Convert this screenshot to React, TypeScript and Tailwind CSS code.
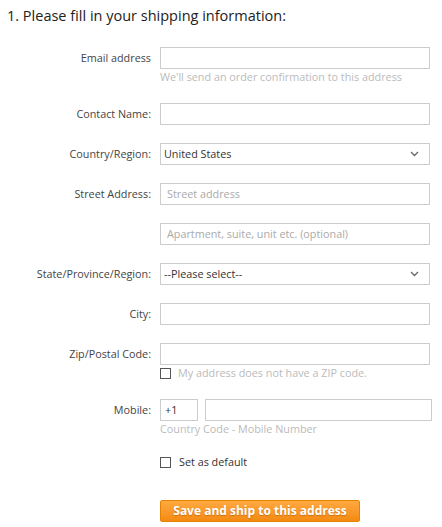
import React from "react"

// -------------------------------------------------------------------
// Small pieces
// -------------------------------------------------------------------

const FONT = "font-['Open_Sans',_'Liberation_Sans',_sans-serif]"

function Label({ children }: { children?: React.ReactNode }) {
  return (
    <div className="w-[151px] shrink-0 text-right text-[10.8px] leading-[22px] text-[#444]">
      {children}
    </div>
  )
}

function TextBox({ placeholder }: { placeholder?: string }) {
  return (
    <div className="flex h-[22px] w-[270px] items-center border border-[#ccc] bg-white px-[6px] text-[10.8px] text-[#aaa]">
      {placeholder}
    </div>
  )
}

function SelectBox({ value }: { value: string }) {
  return (
    <div className="flex h-[22px] w-[270px] items-center justify-between border border-[#ccc] bg-white pl-[3px] pr-[10px] text-[10.8px] text-[#333]">
      <span>{value}</span>
      <svg width="9" height="6" viewBox="0 0 9 6" fill="none">
        <path d="M1 1l3.5 3.5L8 1" stroke="#666" strokeWidth="1.3" />
      </svg>
    </div>
  )
}

function Check({ label, muted }: { label: string; muted?: boolean }) {
  return (
    <div className="flex h-[16px] items-center">
      <span className="h-[11px] w-[11px] border border-[#555] bg-white" />
      <span
        className={
          muted
            ? "ml-[7px] text-[10.8px] text-[#bbb]"
            : "ml-[8px] text-[10.8px] text-[#333]"
        }
      >
        {label}
      </span>
    </div>
  )
}

function Row({
  label,
  children,
  className = "mb-[18px]",
}: {
  label?: string
  children: React.ReactNode
  className?: string
}) {
  return (
    <div className={"flex items-start gap-[9px] " + className}>
      <Label>{label}</Label>
      <div className="flex flex-col">{children}</div>
    </div>
  )
}

const Hint = ({ children }: { children: React.ReactNode }) => (
  <div className="h-[16px] text-[10.8px] leading-[16px] text-[#bbb]">{children}</div>
)

// -------------------------------------------------------------------
// Page
// -------------------------------------------------------------------

export default function App() {
  return (
    <div className={`${FONT} h-[527px] w-[442px] bg-white`}>
      <h1 className="pl-[7px] pt-[6px] text-[14.5px] leading-[20px] text-[#222]">
        1. Please fill in your shipping information:
      </h1>

      <div className="mt-[21px] flex flex-col">
        <Row label="Email address">
          <TextBox />
          <Hint>We'll send an order confirmation to this address</Hint>
        </Row>

        <Row label="Contact Name:">
          <TextBox />
        </Row>

        <Row label="Country/Region:">
          <SelectBox value="United States" />
        </Row>

        <Row label="Street Address:">
          <TextBox placeholder="Street address" />
        </Row>

        <Row>
          <TextBox placeholder="Apartment, suite, unit etc. (optional)" />
        </Row>

        <Row label="State/Province/Region:">
          <SelectBox value="--Please select--" />
        </Row>

        <Row label="City:">
          <TextBox />
        </Row>

        <Row label="Zip/Postal Code:">
          <TextBox />
          <Check label="My address does not have a ZIP code." muted />
        </Row>

        <Row label="Mobile:" className="mb-[17px]">
          <div className="flex gap-[7px]">
            <div className="flex h-[22px] w-[38px] items-center border border-[#ccc] px-[4px] text-[10.8px] text-[#333]">
              +1
            </div>
            <div className="h-[22px] w-[227px] border border-[#ccc]" />
          </div>
          <Hint>Country Code - Mobile Number</Hint>
        </Row>

        <Row className="mb-[30px]">
          <Check label="Set as default" />
        </Row>

        <Row>
          <button className="h-[22px] w-[200px] rounded-[2px] border border-[#e58200] bg-gradient-to-b from-[#ffa93f] to-[#f48a0e] text-[12px] font-bold text-white [text-shadow:0_1px_1px_rgba(160,80,0,0.5)]">
            Save and ship to this address
          </button>
        </Row>
      </div>
    </div>
  )
}
